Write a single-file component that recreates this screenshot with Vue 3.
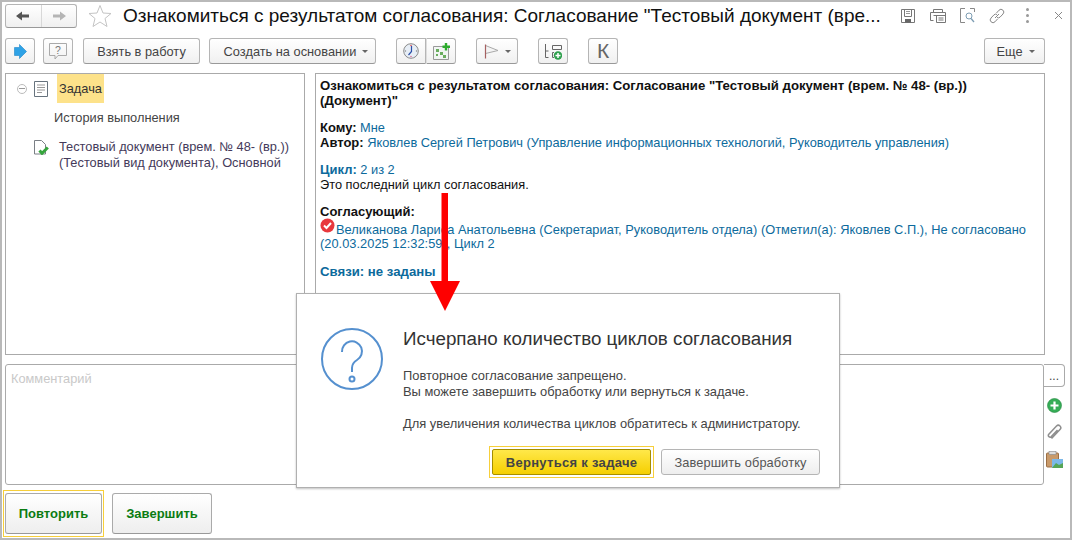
<script setup>
</script>

<template>
  <div class="window">
    <header class="titlebar">
      <div class="nav">
        <button class="nav-btn">
          <svg width="16" height="12" viewBox="0 0 16 12"><path d="M1 6 L7 1.500 V4.500 H14 V7.500 H7 V10.500 Z" fill="#555" /></svg>
        </button>
        <button class="nav-btn">
          <svg width="16" height="12" viewBox="0 0 16 12"><path d="M15 6 L9 1.500 V4.500 H2 V7.500 H9 V10.500 Z" fill="#b5b5b5" /></svg>
        </button>
      </div>
      <svg class="star" width="24" height="24" viewBox="0 0 24 24"><path d="M12 1.500 L15 9 L23 9.500 L17 14.500 L19 22.500 L12 18 L5 22.500 L7 14.500 L1 9.500 L9 9 Z" fill="none" stroke="#c4c4c4" /></svg>
      <h1 class="title">Ознакомиться с результатом согласования: Согласование "Тестовый документ (вре...</h1>
      <div class="title-tools">
        <svg width="16" height="16" viewBox="0 0 16 16" fill="none" stroke="#777"><path d="M1.500 1.500 H14.500 V14.500 H1.500 Z M4.500 1.500 V8.500 H11.500 V1.500" /><path d="M6 3.500 H10 M6 5.500 H10" stroke="#999" /><rect x="5" y="11" width="6" height="3.500" fill="#666" stroke="none" /></svg>
        <svg width="18" height="16" viewBox="0 0 18 16" fill="none" stroke="#777"><path d="M4.500 4.500 V1.500 H13.500 V4.500 M4.500 12.500 H1.500 V4.500 H16.500 V12.500" /><path d="M4.500 7.500 H16.500 M7.500 7.500 V14.500 H16.500 V7.500 M9.500 10 H14.500 M9.500 12 H14.500" /></svg>
        <svg width="16" height="16" viewBox="0 0 16 16" fill="none" stroke="#888"><path d="M5 .500 H.500 V14.500 H5 M10 .500 H14.500 V4" /><circle cx="9" cy="8" r="3" stroke="#7d9db3" /><path d="M11 10.500 L14 14" stroke="#7d9db3" stroke-width="1.300" /></svg>
        <svg width="16" height="16" viewBox="0 0 16 16" fill="none" stroke="#888"><path d="M6 10 L10 6 M7.500 5 L10 2.200 A2.700 2.700 0 0 1 14 6 L11 9.200 A2.500 2.500 0 0 1 8 9.500 M8.500 11 L6 13.800 A2.700 2.700 0 0 1 2 10 L5 6.800 A2.500 2.500 0 0 1 8 6.500" /></svg>
        <span class="dots"><i></i><i></i><i></i></span>
        <svg class="close" width="9" height="9" viewBox="0 0 9 9"><path d="M1 1 L8 8 M8 1 L1 8" stroke="#888" /></svg>
      </div>
    </header>

    <nav class="toolbar">
      <button class="btn square">
        <svg width="13" height="15" viewBox="0 0 13 15"><path d="M.500 3.500 H5.500 V.500 L12.500 7.500 L5.500 14.500 V11.500 H.500 Z" fill="#2ea2e6" stroke="#1e86c8" stroke-width=".6" /></svg>
      </button>
      <button class="btn square">
        <svg width="18" height="17" viewBox="0 0 18 17" fill="none" stroke="#aaa"><path d="M.500 .500 H17.500 V12.500 H9 L6 16 V12.500 H.500 Z" /><text x="9" y="10.500" font-size="10.500" text-anchor="middle" fill="#777" stroke="none" font-family="Liberation Sans">?</text></svg>
      </button>
      <button class="btn work">Взять в работу</button>
      <button class="btn create">Создать на основании<i class="caret"></i></button>
      <div class="group">
        <button class="btn square seg-l">
          <svg width="16" height="16" viewBox="0 0 16 16"><circle cx="8" cy="8" r="7.300" fill="#e7eef6" stroke="#8a8a8a" /><path d="M8.500 3 V8.500 L5.500 12" fill="none" stroke="#2a4fa8" stroke-width="1.200" /><circle cx="8" cy="2.500" r=".7" fill="#d33" /><circle cx="13.500" cy="8" r=".7" fill="#888" /><circle cx="2.500" cy="8" r=".7" fill="#888" /><circle cx="8" cy="13.500" r=".7" fill="#d58" /></svg>
        </button>
        <button class="btn square seg-r">
          <svg width="17" height="17" viewBox="0 0 17 17"><path d="M.500 3.500 H15.500 V16.500 H.500 Z" fill="#f1f5f3" stroke="#999" /><path d="M3 6 h3 v3 h-3 Z M7 9 h3 v3 h-3 Z M10 12 h3 v3 h-3 Z M3 11 h2 v2 h-2 Z" fill="#69ad5e" /><path d="M13 0 V7.500 M9.500 3.700 H17" stroke="#2cab2c" stroke-width="2.400" /></svg>
        </button>
      </div>
      <button class="btn flag">
        <svg width="15" height="15" viewBox="0 0 15 15" fill="none"><path d="M1.500 1.500 L14 6.500 L1.500 9.500 Z" stroke="#aaa" fill="#f4f4f4" /><path d="M1.500 .500 V14.500" stroke="#a56060" stroke-width="1.200" /></svg>
        <i class="caret"></i>
      </button>
      <button class="btn square tree-btn">
        <svg width="17" height="17" viewBox="0 0 17 17" fill="none" stroke="#666"><path d="M.500 1 V14.500 H3.500 M.500 8 H3.500" /><path d="M7.500 2.500 H16.500 V6.500 H7.500 Z" /><path d="M9 9.500 H7.500 V14.500 H9" /><circle cx="13" cy="12.500" r="4.200" fill="#2fa04e" stroke="none" /><path d="M13 10 V15 M10.500 12.500 H15.500" stroke="#fff" stroke-width="1.500" /></svg>
      </button>
      <button class="btn square letter">К</button>
      <button class="btn more">Еще<i class="caret"></i></button>
    </nav>

    <main class="workspace">
      <aside class="tree">
        <div class="tree-row task">
          <span class="collapse"></span>
          <svg class="doc" width="14" height="16" viewBox="0 0 14 16" fill="none"><path d="M.500 .500 H13.500 V15.500 H.500 Z" stroke="#66727d" /><path d="M3 4 H11 M3 6.500 H11 M3 9 H11 M3 11.500 H8" stroke="#999" /></svg>
          <span class="task-name">Задача</span>
        </div>
        <div class="history">История выполнения</div>
        <div class="tree-row doc-row">
          <svg class="doc-check" width="15" height="15" viewBox="0 0 15 15" fill="none"><path d="M.500 .500 H7.500 L11.500 4.500 V14 H.500 Z" fill="#fff" stroke="#7a7f85" /><path d="M5.500 10.500 L8 13.300 L13.800 7.500" stroke="#35a53c" stroke-width="3" /></svg>
          <span>Тестовый документ (врем. № 48- (вр.))<br />(Тестовый вид документа), Основной</span>
        </div>
      </aside>

      <section class="details">
        <p class="strong">Ознакомиться с результатом согласования: Согласование "Тестовый документ (врем. № 48- (вр.))<br />(Документ)"</p>
        <p class="block"><b>Кому:</b> <a>Мне</a><br /><b>Автор:</b> <a>Яковлев Сергей Петрович (Управление информационных технологий, Руководитель управления)</a></p>
        <p class="block"><a><b>Цикл:</b> 2 из 2</a><br />Это последний цикл согласования.</p>
        <div class="block approver">
          <b class="approver-head">Согласующий:</b>
          <p class="approver-line"><svg class="badge" width="15" height="15" viewBox="0 0 15 15"><circle cx="7.500" cy="7.500" r="7" fill="#e8383d" /><path d="M4 7.500 L6.500 10 L11 5" fill="none" stroke="#fff" stroke-width="2" /></svg><a>Великанова Лариса Анатольевна (Секретариат, Руководитель отдела) (Отметил(а): Яковлев С.П.), Не согласовано (20.03.2025 12:32:59), Цикл 2</a></p>
        </div>
        <p class="block"><a class="link-strong">Связи: не заданы</a></p>
      </section>
    </main>

    <section class="comment-row">
      <div class="comment">Комментарий</div>
      <div class="comment-side">
        <button class="ellipsis">...</button>
        <svg class="side-icon" width="15" height="15" viewBox="0 0 15 15"><circle cx="7.500" cy="7.500" r="7" fill="#35ad56" stroke="#25863f" stroke-width=".6" /><path d="M7.500 3.500 V11.500 M3.500 7.500 H11.500" stroke="#fff" stroke-width="2.200" /></svg>
        <svg class="side-icon" width="15" height="16" viewBox="0 0 15 16" fill="none"><path d="M4.500 14.500 L13 5.500 A2.400 2.400 0 0 0 9.500 2 L1.800 10.300 A1.700 1.700 0 0 0 4.300 12.600 L10.500 6" stroke="#8f8f8f" stroke-width="1.500" /></svg>
        <svg class="side-icon" width="17" height="17" viewBox="0 0 17 17"><rect x=".5" y="2" width="12" height="14" rx="1" fill="#c99a6a" stroke="#9b6f45" /><rect x="3" y=".5" width="7" height="3" fill="#ddd" stroke="#888" stroke-width=".6" /><rect x="6" y="8" width="11" height="9" fill="#7cb8e8" /><path d="M6 17 L10 12 L13 14 L17 12 V17 Z" fill="#56a556" /></svg>
      </div>
    </section>

    <footer class="actions">
      <div class="focus-ring"><button class="action">Повторить</button></div>
      <button class="action wide">Завершить</button>
    </footer>

    <div class="arrow">
      <svg width="32" height="120" viewBox="0 0 32 120"><path d="M12.500 0 H19 V88 H31 L16 118 L1 88 H12.500 Z" fill="#fe0000" /></svg>
    </div>

    <div class="dialog">
      <svg class="dialog-icon" width="64" height="64" viewBox="0 0 64 64" fill="none" stroke="#5590cf" stroke-width="2">
        <circle cx="32" cy="32" r="30" />
        <path d="M22 25 A10 10 0 1 1 37 33 Q32 36 32 41 V45" />
        <circle cx="32" cy="52" r="2.500" />
      </svg>
      <div class="dialog-body">
        <h2>Исчерпано количество циклов согласования</h2>
        <p>Повторное согласование запрещено.<br />Вы можете завершить обработку или вернуться к задаче.</p>
        <p>Для увеличения количества циклов обратитесь к администратору.</p>
        <div class="dialog-actions">
          <div class="focus-ring small"><button class="primary">Вернуться к задаче</button></div>
          <button class="secondary">Завершить обработку</button>
        </div>
      </div>
    </div>
  </div>
</template>

<style>
html, body { margin: 0; padding: 0; background: #fff; }
</style>

<style scoped>
.window {
  position: relative;
  box-sizing: border-box;
  width: 1072px;
  height: 540px;
  border: 2px solid #b9b9b9;
  background: #fff;
  font-family: "Liberation Sans", Arial, sans-serif;
  font-size: 12.8px;
  color: #333;
  overflow: hidden;
}
button { font-family: inherit; cursor: default; padding: 0; margin: 0; }
.titlebar { display: flex; align-items: center; height: 27px; padding: 0 0 0 3px; box-sizing: border-box; }
.nav { display: flex; width: 72px; height: 24px; box-sizing: border-box; border: 1px solid #b5b5b5; border-bottom-color: #999; border-radius: 3px; background: linear-gradient(#fff, #f0f0f0); flex: none; }
.nav-btn { flex: 1; border: 0; background: none; display: flex; align-items: center; justify-content: center; }
.nav-btn + .nav-btn { border-left: 1px solid #d8d8d8; }
.star { margin-left: 11px; flex: none; }
.title { margin: 0 0 0 11px; width: 761px; flex: none; font-size: 19px; font-weight: 400; color: #111; white-space: nowrap; line-height: 24px; }
.title-tools { display: flex; align-items: center; margin-left: 16px; gap: 13px; }
.dots { display: flex; flex-direction: column; gap: 3px; margin-left: 8px; }
.dots i { display: block; width: 3px; height: 3px; background: #999; border-radius: 2px; }
.close { margin-left: 12px; }

.toolbar { display: flex; align-items: flex-start; height: 37px; padding: 9px 0 0 3px; box-sizing: border-box; }
.btn { display: inline-flex; align-items: center; justify-content: center; height: 26px; box-sizing: border-box; border: 1px solid #b5b5b5; border-bottom-color: #999; border-radius: 3px; background: linear-gradient(#fff, #f0f0f0); color: #444; font-size: 12.8px; flex: none; }
.square { width: 30px; margin-right: 8px; }
.work { width: 117px; margin-left: 2px; margin-right: 9px; }
.create { width: 167px; margin-right: 20px; padding-left: 7px; }
.group { display: flex; margin-right: 20px; }
.seg-l { margin: 0; border-radius: 3px 0 0 3px; }
.seg-r { margin: 0; border-left-color: #ddd; border-radius: 0 3px 3px 0; }
.flag { width: 42px; margin-right: 20px; }
.tree-btn { margin-right: 20px; }
.letter { font-size: 21px; color: #666; margin-right: 0; }
.more { width: 61px; margin-left: auto; margin-right: 25px; padding-left: 2px; }
.caret { display: inline-block; margin-left: 6px; width: 0; height: 0; border: 3px solid transparent; border-top: 3px solid #666; border-bottom: 0; }

.workspace { display: flex; margin: 7px 0 0 3px; gap: 10px; height: 282px; }
.tree { width: 300px; box-sizing: border-box; border: 1px solid #aaa; color: #444; position: relative; flex: none; }
.tree-row { display: flex; }
.task { height: 29px; align-items: center; padding-left: 11px; }
.collapse { position: relative; width: 8px; height: 8px; border: 1px solid #bbb; border-radius: 50%; flex: none; }
.collapse::after { content: ""; position: absolute; left: 1px; right: 1px; top: 3.500px; height: 1px; background: #999; }
.doc { margin-left: 7px; flex: none; }
.task-name { margin-left: 9px; height: 29px; line-height: 29px; padding: 0 2px; background: #fde28a; color: #333; }
.history { margin: 6px 0 0 48px; height: 17px; line-height: 17px; }
.doc-row { margin-top: 13px; padding-left: 28px; color: #443a5a; line-height: 16px; }
.doc-check { margin: 1px 10px 0 0; flex: none; }

.details { width: 730px; height: 282px; box-sizing: border-box; border: 1px solid #aaa; padding: 5px 4px; color: #111; line-height: 14.5px; flex: none; }
.details p { margin: 0; }
.strong { font-weight: 700; font-size: 13.2px; }
.details .block { margin-top: 13px; }
.details a { color: #0c6a9c; }
.details b { font-size: 13px; }
.approver-head { display: block; margin-bottom: 3px; }
.approver-line { letter-spacing: .04px; }
.link-strong { font-weight: 700; font-size: 13.2px; }
.badge { vertical-align: -1px; margin-right: 1px; margin-top: -4px; position: relative; top: -2px; }

.comment-row { display: flex; margin: 9px 0 0 3px; }
.comment { width: 1039px; height: 121px; box-sizing: border-box; border: 1px solid #aaa; border-radius: 3px; padding: 6px 5px; color: #c9c9c9; flex: none; }
.comment-side { display: flex; flex-direction: column; align-items: center; width: 20px; position: relative; }
.ellipsis { align-self: flex-start; width: 21px; height: 23px; border: 1px solid #aaa; border-left: 0; border-radius: 0 4px 4px 0; background: #fff; color: #444; font-size: 12px; line-height: 18px; flex: none; }
.side-icon { margin-top: 11px; flex: none; }

.actions { display: flex; align-items: center; margin: 5px 0 0 1px; gap: 8px; }
.focus-ring { box-sizing: border-box; padding: 2px 1px; border: 1px solid #f7cf3b; display: flex; }
.action { width: 97px; height: 41px; box-sizing: border-box; border: 1px solid #aaa; border-bottom-color: #999; border-radius: 3px; background: linear-gradient(#fff, #eee); color: #0b7c12; font-weight: 700; font-size: 13px; }
.action.wide { width: 100px; }

.arrow { position: absolute; left: 427px; top: 191px; line-height: 0; z-index: 2; }
.dialog { position: absolute; left: 294px; top: 291px; width: 544px; height: 195px; box-sizing: border-box; border: 1px solid #b0b0b0; background: #fff; box-shadow: 0 1px 2px rgba(0,0,0,.25); display: flex; padding: 33px 0 0 23px; z-index: 1; }
.dialog-icon { flex: none; }
.dialog-body { margin-left: 19px; width: 417px; }
.dialog-body h2 { margin: 0 0 17px; font-size: 18.8px; font-weight: 400; color: #333; line-height: 24px; white-space: nowrap; }
.dialog-body p { margin: 16px 0 0; line-height: 16px; font-size: 12.9px; color: #444; white-space: nowrap; }
.dialog-body h2 + p { margin-top: 0; }
.dialog-actions { display: flex; align-items: center; justify-content: flex-end; gap: 7px; margin-top: 14px; }
.focus-ring.small { padding: 2px; }
.primary { width: 159px; height: 26px; box-sizing: border-box; border: 1px solid #a58e00; border-radius: 2px; background: linear-gradient(#ffe84a, #f5cf00); color: #444; font-weight: 700; font-size: 13px; letter-spacing: .3px; }
.secondary { width: 159px; height: 26px; box-sizing: border-box; border: 1px solid #b5b5b5; border-radius: 3px; background: linear-gradient(#fff, #eee); color: #555; font-size: 12.8px; letter-spacing: .1px; }
</style>
